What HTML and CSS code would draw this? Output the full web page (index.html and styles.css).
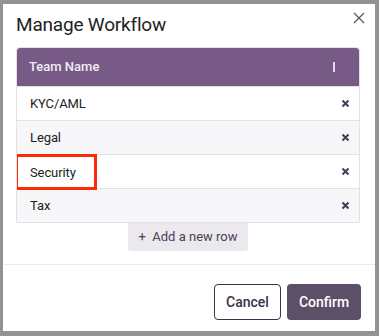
FILE: index.html
```html
<!DOCTYPE html>
<html lang="en">

<head>
    <meta charset="UTF-8">
    <meta name="viewport" content="width=device-width, initial-scale=1.0">
    <title>Manage Workflow</title>
    <link rel="stylesheet" href="styles.css">
</head>

<body>
    <div class="modal">
        <div class="modal-header">
            <h1 class="title">Manage Workflow</h1>
            <span class="close">
                <svg width="12" height="12" viewBox="0 0 12 12">
                    <path d="M1 1 L11 11 M11 1 L1 11" stroke="#5a5a5a" stroke-width="1.3" fill="none" />
                </svg>
            </span>
        </div>

        <div class="modal-body">
            <div class="team-table">
                <div class="team-head">
                    <span>Team Name</span>
                    <span class="resize"></span>
                </div>
                <div class="team-row">
                    <span>KYC/AML</span>
                    <span class="remove"><svg width="9" height="9" viewBox="0 0 9 9"><path d="M1.5 1.5 L7.5 7.5 M7.5 1.5 L1.5 7.5" stroke="#4a3a58" stroke-width="2" /></svg></span>
                </div>
                <div class="team-row alt">
                    <span>Legal</span>
                    <span class="remove"><svg width="9" height="9" viewBox="0 0 9 9"><path d="M1.5 1.5 L7.5 7.5 M7.5 1.5 L1.5 7.5" stroke="#4a3a58" stroke-width="2" /></svg></span>
                </div>
                <div class="team-row">
                    <span class="highlight">Security</span>
                    <span class="remove"><svg width="9" height="9" viewBox="0 0 9 9"><path d="M1.5 1.5 L7.5 7.5 M7.5 1.5 L1.5 7.5" stroke="#4a3a58" stroke-width="2" /></svg></span>
                </div>
                <div class="team-row alt">
                    <span>Tax</span>
                    <span class="remove"><svg width="9" height="9" viewBox="0 0 9 9"><path d="M1.5 1.5 L7.5 7.5 M7.5 1.5 L1.5 7.5" stroke="#4a3a58" stroke-width="2" /></svg></span>
                </div>
            </div>
            <div class="add-wrap">
                <div class="btn-add">&#43;&nbsp; Add a new row</div>
            </div>
        </div>

        <div class="modal-footer">
            <div class="btn btn-cancel">Cancel</div>
            <div class="btn btn-confirm">Confirm</div>
        </div>
    </div>
</body>

</html>
```

FILE: styles.css
```css
html,
body {
    margin: 0;
    height: 336px;
}

body {
    font-family: Roboto, "Liberation Sans", sans-serif;
    background-color: #939393;
    padding: 4px 4px 5px 3px;
    box-sizing: border-box;
}

.modal {
    background-color: #FFF;
    height: 327px;
    display: flex;
    flex-direction: column;
}

.modal-header {
    display: flex;
    justify-content: space-between;
    padding: 8px 10px 0 13px;
}

.title {
    margin: 0;
    font-size: 19px;
    font-weight: 400;
    line-height: 25px;
    letter-spacing: -0.2px;
    color: #222;
}

.close {
    display: flex;
}

.modal-body {
    padding: 10px 15px 0 13px;
}

.team-table {
    border: 1px solid #e2e2e6;
    border-radius: 4px 4px 0 0;
    overflow: hidden;
}

.team-head {
    height: 39px;
    background-color: #775a86;
    color: #f1ecf3;
    font-size: 13px;
    font-weight: 500;
    display: flex;
    align-items: center;
    justify-content: space-between;
    padding: 0 25px 0 13px;
    margin: -1px -1px 0 -1px;
}

.resize {
    width: 2px;
    height: 10px;
    background-color: #e4dce8;
}

.team-row {
    height: 33px;
    border-top: 1px solid #e2e2e6;
    display: flex;
    align-items: center;
    justify-content: space-between;
    padding: 0 9px 0 13px;
    font-size: 13px;
    letter-spacing: -0.1px;
    color: #222;
    background-color: #FFF;
}

.team-row.alt {
    background-color: #f7f7f9;
}

.remove {
    display: flex;
}

.highlight {
    outline: 3px solid #ff2a0a;
    padding: 8px 18px 7px 12px;
    margin-left: -12px;
}

.add-wrap {
    display: flex;
    justify-content: center;
}

.btn-add {
    width: 120px;
    height: 28px;
    line-height: 28px;
    text-align: center;
    background-color: #ebe9ee;
    color: #4a3f55;
    font-size: 13px;
    border-radius: 0 0 3px 3px;
}

.modal-footer {
    margin-top: 13px;
    border-top: 1px solid #ececec;
    display: flex;
    justify-content: flex-end;
    gap: 6px;
    padding: 19px 14px 0 0;
}

.btn {
    height: 36px;
    line-height: 36px;
    box-sizing: border-box;
    border-radius: 4px;
    font-size: 14px;
    font-weight: 500;
    text-align: center;
}

.btn-cancel {
    width: 67px;
    border: 1px solid #3e3049;
    line-height: 34px;
    color: #3e3049;
}

.btn-confirm {
    width: 74px;
    background-color: #5c5069;
    color: #FFF;
}
```
